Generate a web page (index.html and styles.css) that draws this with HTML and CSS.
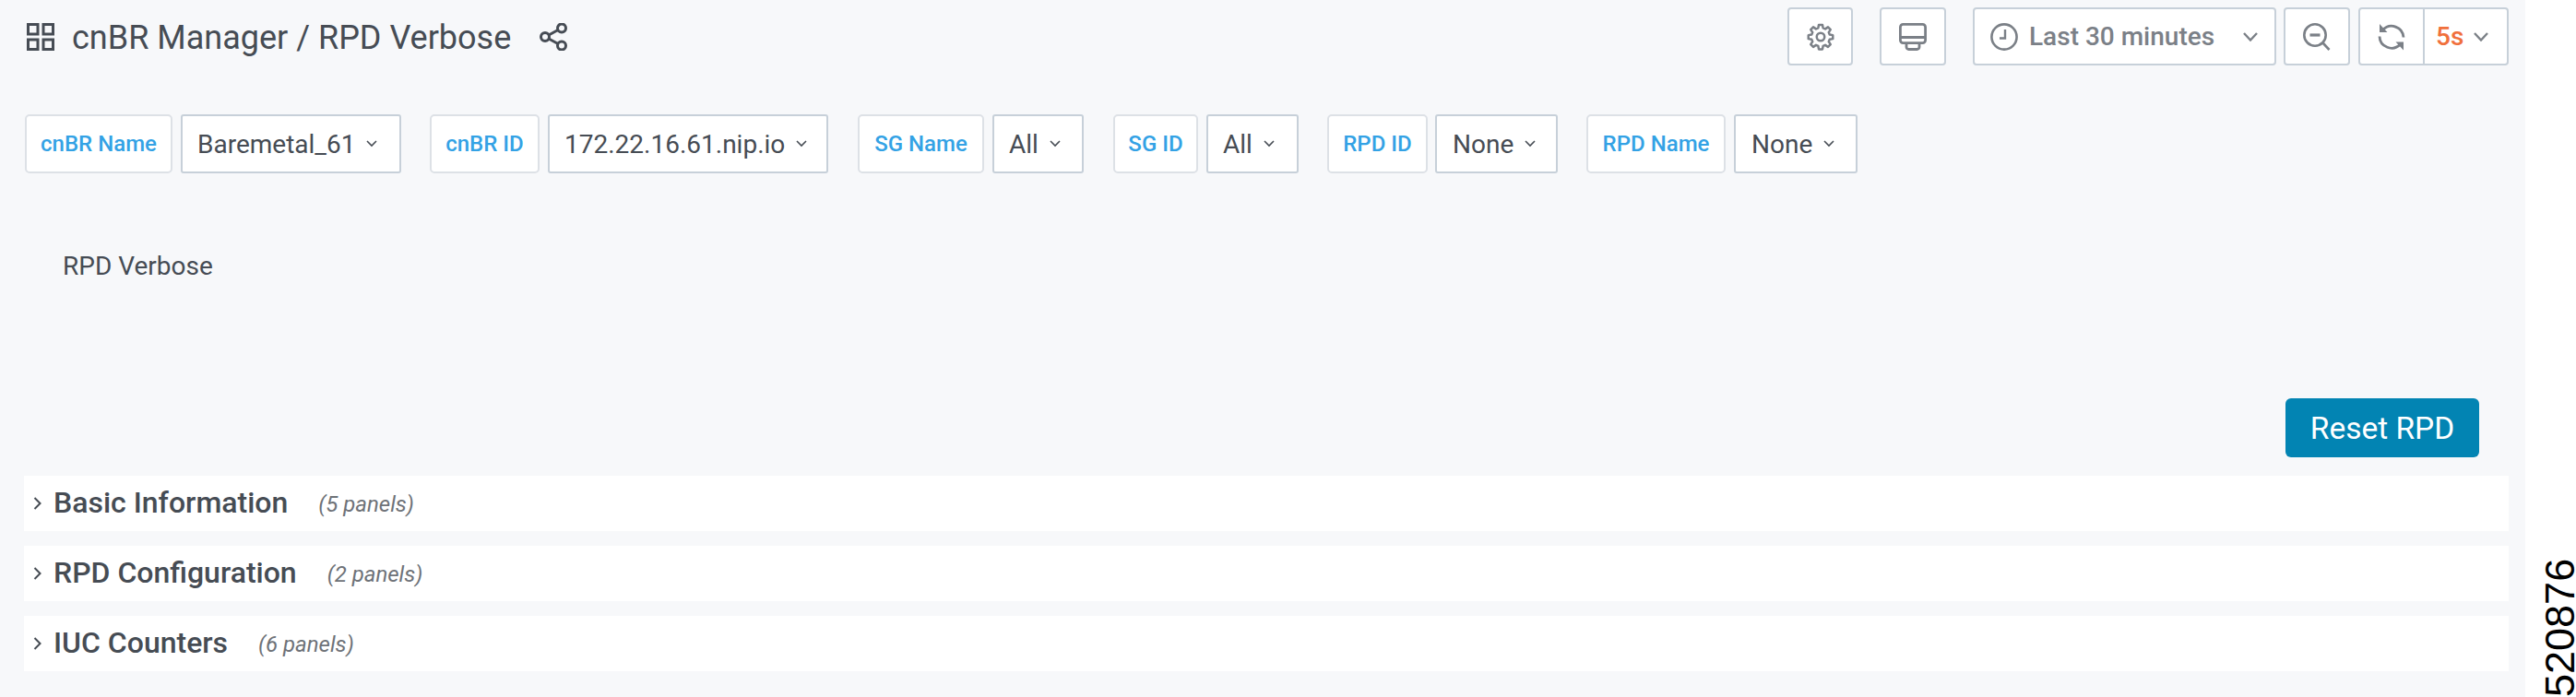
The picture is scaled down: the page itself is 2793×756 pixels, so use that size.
FILE: index.html
```html
<!DOCTYPE html>
<html lang="en">
<head>
<meta charset="utf-8">
<title>cnBR Manager / RPD Verbose</title>
<link rel="stylesheet" href="styles.css">
</head>
<body>
<main class="dashboard">
  <header class="topbar">
    <div class="crumb">
      <svg class="ico-grid" viewBox="0 0 30 30"><g fill="none" stroke="#464c54" stroke-width="3"><rect x="1.5" y="1.5" width="10.5" height="10.5"/><rect x="18" y="1.5" width="10.5" height="10.5"/><rect x="1.5" y="18" width="10.5" height="10.5"/><rect x="18" y="18" width="10.5" height="10.5"/></g></svg>
      <h1 class="title">cnBR Manager / RPD Verbose</h1>
      <svg class="ico-share" viewBox="0 0 30 30"><g fill="none" stroke="#464c54" stroke-width="3"><circle cx="6" cy="15" r="4.5"/><circle cx="24" cy="5.5" r="4.5"/><circle cx="24" cy="24.5" r="4.5"/><path d="M10 13l10-5.5M10 17l10 5.5"/></g></svg>
    </div>
    <div class="tools">
      <button class="tool tool-icon t-gear"><svg class="ico-30" viewBox="0 0 24 24"><g fill="none" stroke="#7b8087" stroke-width="2" stroke-linejoin="round"><circle cx="12" cy="12" r="3.4"/><path d="M10.4 1.5h3.2l.5 2.8 1.9.8 2.4-1.6 2.2 2.2-1.6 2.4.8 1.9 2.8.5v3.2l-2.8.5-.8 1.9 1.6 2.4-2.2 2.2-2.4-1.6-1.9.8-.5 2.8h-3.2l-.5-2.8-1.9-.8-2.4 1.6-2.2-2.2 1.6-2.4-.8-1.9-2.8-.5v-3.2l2.8-.5.8-1.9-1.6-2.4 2.2-2.2 2.4 1.6 1.9-.8z"/></g></svg></button>
      <button class="tool tool-icon t-monitor"><svg class="ico-30" viewBox="0 0 30 30"><g fill="none" stroke="#7b8087" stroke-width="2.8"><rect x="1.4" y="1.4" width="27.2" height="20.2" rx="3"/><path d="M1.4 15.5h27.2" stroke-width="3"/><path d="M8 22.5v3.5a2.5 2.5 0 0 0 2.5 2.5h9a2.5 2.5 0 0 0 2.5-2.5v-3.5"/></g></svg></button>
      <button class="tool t-time">
        <svg class="ico-30" viewBox="0 0 30 30"><g fill="none" stroke="#7b8087" stroke-width="2.6"><circle cx="15" cy="15" r="13.6"/><path d="M16 7v9.5H10" stroke-width="2.4"/></g></svg>
        <span class="time-text">Last 30 minutes</span>
        <svg class="chev-tool" viewBox="0 0 16 10"><path d="M1 1l7 7.5L15 1" fill="none" stroke="#7b8087" stroke-width="2.4"/></svg>
      </button>
      <button class="tool tool-icon t-zoom"><svg class="ico-30" viewBox="0 0 30 30"><g fill="none" stroke="#7b8087" stroke-width="2.6"><circle cx="13" cy="13" r="11.7"/><path d="M21.5 21.5l7 7.5"/><path d="M7.5 13h11" stroke-width="3.2"/></g></svg></button>
      <div class="tool t-refresh">
        <span class="refresh-cell"><svg class="ico-30" viewBox="0 0 30 30"><g fill="none" stroke="#7b8087" stroke-width="2.8"><path d="M5.5 7.5A13 13 0 0 1 28 15.5"/><path d="M2 14.5A13 13 0 0 0 24.5 23"/></g><path d="M2 1v9h8.5zM28 29.5v-9h-8.5z" fill="#7b8087"/></svg></span>
        <span class="interval"><span class="interval-text">5s</span><svg class="chev-tool" viewBox="0 0 16 10"><path d="M1 1l7 7.5L15 1" fill="none" stroke="#7b8087" stroke-width="2.4"/></svg></span>
      </div>
    </div>
  </header>

  <section class="filters">
    <div class="filter f1"><span class="label l1">cnBR Name</span><span class="select">Baremetal_61<svg class="chev-sel" viewBox="0 0 12 8"><path d="M1 1l5 5 5-5" fill="none" stroke="#464c54" stroke-width="1.6"/></svg></span></div>
    <div class="filter f2"><span class="label l2">cnBR ID</span><span class="select">172.22.16.61.nip.io<svg class="chev-sel" viewBox="0 0 12 8"><path d="M1 1l5 5 5-5" fill="none" stroke="#464c54" stroke-width="1.6"/></svg></span></div>
    <div class="filter f3"><span class="label l3">SG Name</span><span class="select">All<svg class="chev-sel" viewBox="0 0 12 8"><path d="M1 1l5 5 5-5" fill="none" stroke="#464c54" stroke-width="1.6"/></svg></span></div>
    <div class="filter f4"><span class="label l4">SG ID</span><span class="select">All<svg class="chev-sel" viewBox="0 0 12 8"><path d="M1 1l5 5 5-5" fill="none" stroke="#464c54" stroke-width="1.6"/></svg></span></div>
    <div class="filter f5"><span class="label l5">RPD ID</span><span class="select">None<svg class="chev-sel" viewBox="0 0 12 8"><path d="M1 1l5 5 5-5" fill="none" stroke="#464c54" stroke-width="1.6"/></svg></span></div>
    <div class="filter f6"><span class="label l6">RPD Name</span><span class="select">None<svg class="chev-sel" viewBox="0 0 12 8"><path d="M1 1l5 5 5-5" fill="none" stroke="#464c54" stroke-width="1.6"/></svg></span></div>
  </section>

  <p class="panel-text">RPD Verbose</p>

  <div class="actions"><button class="reset">Reset RPD</button></div>

  <section class="rows">
    <div class="row"><svg class="chev-row" viewBox="0 0 9 14"><path d="M1.5 1l6 6-6 6" fill="none" stroke="#464c54" stroke-width="2"/></svg><span class="row-title">Basic Information</span><em class="row-note">(5 panels)</em></div>
    <div class="row"><svg class="chev-row" viewBox="0 0 9 14"><path d="M1.5 1l6 6-6 6" fill="none" stroke="#464c54" stroke-width="2"/></svg><span class="row-title">RPD Configuration</span><em class="row-note">(2 panels)</em></div>
    <div class="row"><svg class="chev-row" viewBox="0 0 9 14"><path d="M1.5 1l6 6-6 6" fill="none" stroke="#464c54" stroke-width="2"/></svg><span class="row-title">IUC Counters</span><em class="row-note">(6 panels)</em></div>
  </section>
</main>
<div class="figure-id">520876</div>
</body>
</html>
```
FILE: styles.css
```css
* { box-sizing: border-box; }
html, body { margin: 0; height: 756px; overflow: hidden; background: #fff; }
body { font-family: Roboto, "Liberation Sans", sans-serif; color: #464c54; position: relative; }

.dashboard { width: 2738px; height: 756px; background: #f7f8fa; padding: 8px 18px 0 26px; }

.topbar { display: flex; justify-content: space-between; height: 63px; }
.crumb { display: flex; align-items: center; height: 63px; padding-left: 3px; }
.ico-grid, .ico-share { width: 30px; height: 30px; flex: none; }
.title { margin: 3px 31px 0 19px; font-size: 36px; font-weight: 400; line-height: 44px; color: #464c54; white-space: nowrap; }

.tools { display: flex; }
.tool { display: flex; align-items: center; height: 63px; padding: 0; margin: 0; background: #fff; border: 2px solid #c7d0d9; border-radius: 4px; font-family: inherit; }
.tool-icon { justify-content: center; width: 71px; }
.ico-30 { width: 30px; height: 30px; flex: none; }
.t-monitor { margin-left: 29px; width: 72px; }
.t-time { margin-left: 29px; width: 329px; padding-left: 17px; }
.time-text { margin-left: 12px; font-size: 28px; font-weight: 500; color: #7b8087; white-space: nowrap; }
.t-time .chev-tool { margin-left: 31px; }
.chev-tool { width: 16px; height: 10px; flex: none; }
.t-zoom { margin-left: 8px; width: 72px; }
.t-refresh { margin-left: 9px; width: 163px; }
.refresh-cell { display: flex; justify-content: center; align-items: center; width: 70px; height: 100%; border-right: 2px solid #c7d0d9; }
.interval { display: flex; align-items: center; padding-left: 12px; }
.interval-text { font-size: 28px; font-weight: 500; color: #f0703c; margin-right: 11px; }

.filters { display: flex; margin-top: 53px; }
.filter { display: flex; gap: 9px; height: 64px; flex: none; }
.label { display: flex; align-items: center; justify-content: center; flex: none; height: 64px; background: #fff; border: 2px solid #dde1e6; border-radius: 5px; font-size: 24px; font-weight: 500; color: #33a2e5; white-space: nowrap; }
.select { display: flex; align-items: center; gap: 12px; flex: none; height: 64px; padding-left: 16px; background: #fff; border: 2px solid #c7d0d9; border-radius: 3px; font-size: 28px; color: #464c54; white-space: nowrap; }
.chev-sel { width: 12px; height: 8px; flex: none; }
.f1 { margin-left: 1px; }
.f2 { margin-left: 31px; gap: 9px; }
.f3 { margin-left: 32px; }
.f4 { margin-left: 32px; }
.f5 { margin-left: 31px; gap: 8px; }
.f6 { margin-left: 31px; }
.l1 { width: 160px; } .l2 { width: 119px; } .l3 { width: 137px; } .l4 { width: 92px; } .l5 { width: 109px; } .l6 { width: 151px; }
.f1 .select { width: 239px; } .f2 .select { width: 304px; } .f3 .select { width: 99px; } .f4 .select { width: 100px; } .f5 .select { width: 133px; padding-left: 17px; } .f6 .select { width: 134px; padding-left: 17px; }

.panel-text { margin: 83px 0 0 42px; font-size: 28px; line-height: 36px; color: #464c54; }

.actions { display: flex; justify-content: flex-end; margin-top: 125px; padding-right: 32px; }
.reset { width: 210px; height: 64px; padding: 0; background: #0284b3; color: #fff; border: 0; border-radius: 6px; font-family: inherit; font-size: 33.5px; font-weight: 400; }

.rows { display: flex; flex-direction: column; gap: 16px; margin-top: 20px; }
.row { display: flex; align-items: center; height: 60px; background: #fff; padding-left: 10px; }
.chev-row { width: 9px; height: 14px; flex: none; margin-right: 13px; }
.row-title { margin-bottom: 2px; font-size: 32px; font-weight: 500; color: #464c54; white-space: nowrap; }
.row-note { margin: 2px 0 0 33px; font-size: 24px; font-style: italic; color: #6e7278; white-space: nowrap; }

.figure-id { position: absolute; left: 2757px; top: 605px; writing-mode: vertical-rl; transform: rotate(180deg); font-family: "Liberation Sans", sans-serif; font-size: 45px; line-height: 38px; color: #000; height: 151px; }
```
